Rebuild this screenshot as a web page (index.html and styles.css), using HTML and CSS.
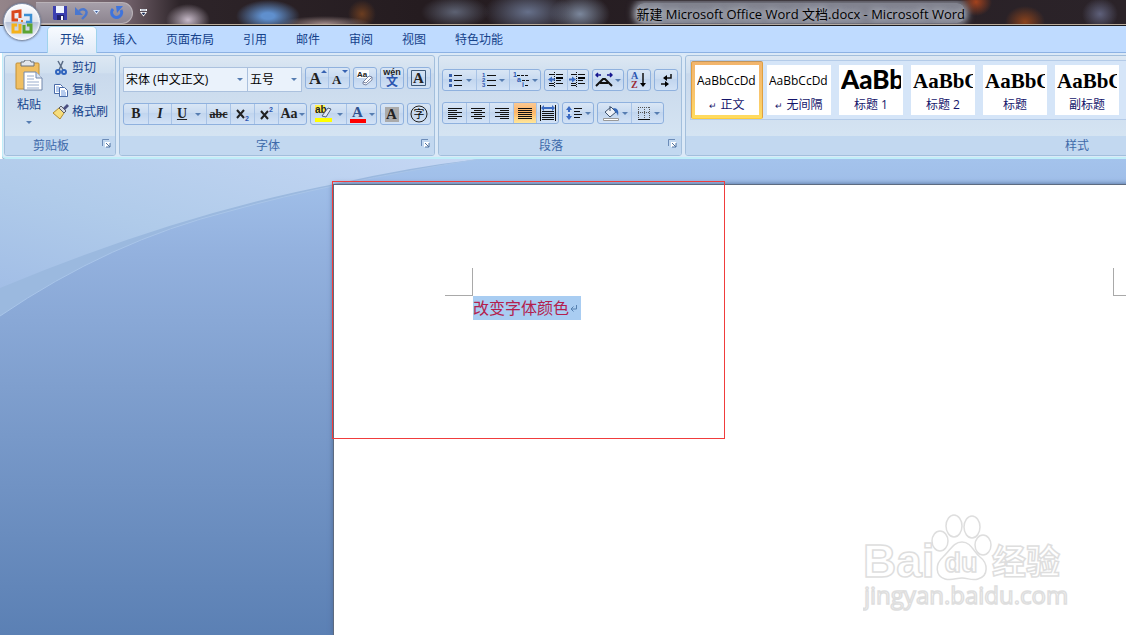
FILE: index.html
```
<!DOCTYPE html>
<html lang="zh-CN">
	<head>
		<meta charset="utf-8" />
		<meta name="viewport" content="width=device-width, initial-scale=1.0" />
		<title>新建 Microsoft Office Word 文档.docx - Microsoft Word</title>
		<link rel="stylesheet" href="styles.css">
	</head>

	<body>
		<header class="titlebar">
			<div class="quick">
				<button class="quick-btn" aria-label="保存">
					<svg width="14" height="14"><path d="M0 0h14v14H1l-1-1z" fill="#3b3fb0"/><path d="M3 0h8v7H3z" fill="#eef3ff"/><path d="M4 9h7v5H4z" fill="#22246e"/><path d="M8 10h2v4H8z" fill="#fff"/></svg>
				</button>
				<button class="quick-btn undo" aria-label="撤消">
					<svg width="14" height="14"><path d="M4 5C9 1 14 5 10 10L7 13" fill="none" stroke="#4a77cf" stroke-width="2.4"/><path d="M0 1v8h8z" fill="#4a77cf"/></svg>
				</button>
				<button class="quick-btn drop" aria-label="撤消列表">
					<svg width="7" height="5"><path d="M0 0h7L3.500 4.500z" fill="#dbe8fb"/><path d="M2 1h3L3.500 3z" fill="#3d5c99"/></svg>
				</button>
				<button class="quick-btn" aria-label="重复">
					<svg width="14" height="14"><path d="M3 3a5 5 0 1 0 8 1" fill="none" stroke="#3f74dc" stroke-width="3"/><path d="M6 0h7L7 7z" fill="#3f74dc"/></svg>
				</button>
			</div>
			<button class="quick-more" aria-label="自定义快速访问工具栏">
				<svg width="7" height="8"><path d="M0 0h7v2H0zM0 3h7L3.500 7.500z" fill="#fff"/><path d="M1 1h5M2 4h3L3.500 6z" stroke="#1b2c55" fill="#1b2c55" stroke-width=".5"/></svg>
			</button>
			<h1 class="title">新建 Microsoft Office Word 文档.docx - Microsoft Word</h1>
			<button class="office" aria-label="Office 按钮">
				<svg width="24" height="26" fill="none" stroke-width="3">
					<path d="M10 9V2L3 3v8h5" stroke="#d9481c"/>
					<path d="M14 6h7v7h-5" stroke="#3c8fd3" stroke-width="2.500"/>
					<path d="M10 15v8H3v-7h4" stroke="#f5b21a"/>
					<path d="M14 16v7h7v-7h-4" stroke="#5ba432"/>
					<path d="M11 11h2v2h-2z" fill="#e2792b"/>
				</svg>
			</button>
		</header>

		<nav class="tabs">
			<button class="tab active">开始</button>
			<button class="tab">插入</button>
			<button class="tab">页面布局</button>
			<button class="tab">引用</button>
			<button class="tab">邮件</button>
			<button class="tab">审阅</button>
			<button class="tab">视图</button>
			<button class="tab">特色功能</button>
		</nav>

		<div class="ribbon">
			<section class="group">
				<div class="tools clipboard">
					<button class="paste">
						<svg width="28" height="32"><rect x="1" y="3" width="23" height="26" rx="1" fill="#f0bf62" stroke="#c28f35"/><path d="M6 2h3l1-2h5l1 2h3v4H6z" fill="#e2e6ec" stroke="#6b7078"/><path d="M9 12h12l6 6v12H9z" fill="#fff" stroke="#7388ac"/><path d="M21 12v6h6" fill="#dbe5f4" stroke="#7388ac"/><path d="M12 16h7M12 19h7M12 22h12M12 25h12M12 28h12" stroke="#9aadcd"/></svg>
						<span>粘贴</span>
						<i class="arrow"></i>
					</button>
					<div class="clip-list">
						<button class="clip-btn">
							<svg width="16" height="16" fill="none"><path d="M5 1l5 9M10 1L6 10" stroke="#5a6b85" stroke-width="1.500"/><circle cx="5" cy="12" r="2" stroke="#2f63bd" stroke-width="2"/><circle cx="11" cy="12" r="2" stroke="#2f63bd" stroke-width="2"/></svg>
							剪切
						</button>
						<button class="clip-btn">
							<svg width="16" height="16" fill="#fff" stroke="#4a6ba8"><path d="M1.500 2.500h6l2 2v7h-8z"/><path d="M6.500 5.500h5l3 3v6h-8z"/><path d="M3 5h3M3 7h3M3 9h3M8 9h4M8 11h5M8 13h5" stroke="#6d97dc"/></svg>
							复制
						</button>
						<button class="clip-btn">
							<svg width="16" height="16"><path d="M0 9l6-5 5 5-4 6z" fill="#f6dd7c" stroke="#b38b2d"/><path d="M6 4l2-2 5 5-2 2z" fill="#d7d9df" stroke="#5a5d66"/><path d="M10 4l4-4 2 2-4 4z" fill="#4a4e80"/></svg>
							格式刷
						</button>
					</div>
				</div>
				<footer class="group-name">剪贴板<button class="launcher" aria-label="剪贴板选项"><svg width="9" height="9"><path d="M.5 7V.5H7" fill="none" stroke="#6c8cb8"/><path d="M3 3h5v5H3z" fill="#fff"/><path d="M4 4l4 4M8 4v4H4" fill="none" stroke="#4d719f"/></svg></button></footer>
			</section>

			<section class="group">
				<div class="tools font-tools">
					<div class="row">
						<div class="combos">
							<select class="combo combo-font" aria-label="字体"><option>宋体 (中文正文)</option></select>
							<select class="combo combo-size" aria-label="字号"><option>五号</option></select>
						</div>
						<div class="set">
							<button class="btn w22" aria-label="增大字体"><svg width="20" height="18"><text x="2" y="15" class="serif" font-size="17">A</text><path d="M14 4h6l-3-3z" fill="#3762b2"/></svg></button>
							<button class="btn w21" aria-label="缩小字体"><svg width="20" height="18"><text x="3" y="15" class="serif" font-size="13">A</text><path d="M13 1h6l-3 3z" fill="#3762b2"/></svg></button>
						</div>
						<div class="set"><button class="btn w22" aria-label="清除格式"><svg width="20" height="18"><path d="M2 1h12v8H2z" fill="#fff"/><text x="2" y="8" class="sans" font-size="8">Aa</text><path d="M8 13l6-6 3 1v3l-6 5-3-1z" fill="#fff" stroke="#7a86a4"/><path d="M8 13l3 1 6-6" fill="none" stroke="#7a86a4"/></svg></button></div>
						<div class="set"><button class="btn w22" aria-label="拼音指南"><svg width="20" height="20"><text x="10" y="7" class="sans" font-size="9" text-anchor="middle">wén</text><text x="10" y="18" class="cjk blue" font-size="12" font-weight="700" text-anchor="middle">文</text></svg></button></div>
						<div class="set"><button class="btn w22" aria-label="字符边框"><svg width="18" height="18"><path d="M1.500 1.500h14v15h-14z" fill="none" stroke="#3d5878"/><text x="3" y="14" class="serif" font-size="15">A</text></svg></button></div>
					</div>
					<div class="row">
						<div class="set">
							<button class="btn w24 serif-b"><b>B</b></button>
							<button class="btn w23 serif-b"><i>I</i></button>
							<button class="btn w35 serif-b"><u>U</u><i class="arrow"></i></button>
							<button class="btn w24 strike">abc</button>
							<button class="btn w24" aria-label="下标"><svg width="18" height="16"><path d="M3 4l7 8M10 4l-7 8" stroke="#222" stroke-width="2"/><text x="11" y="15" class="sans blue" font-size="7">2</text></svg></button>
							<button class="btn w24" aria-label="上标"><svg width="18" height="16"><path d="M3 5l7 8M10 5l-7 8" stroke="#222" stroke-width="2"/><text x="11" y="6" class="sans blue" font-size="7">2</text></svg></button>
							<button class="btn w28 case">Aa<i class="arrow"></i></button>
						</div>
						<div class="set">
							<button class="btn w35" aria-label="突出显示"><svg width="20" height="18"><path d="M0 0h10v8H0z" fill="#fff24a"/><text x="0" y="8" class="sans" font-size="10">ab</text><path d="M7 11l6-8 3 1-5 8z" fill="#e3e9f3" stroke="#51617e"/><path d="M0 13h17v4H0z" fill="#ff0"/></svg><i class="arrow"></i></button>
							<button class="btn w30" aria-label="字体颜色"><svg width="18" height="18"><text x="3" y="12" class="serif navy" font-size="15">A</text><path d="M1 14h16v4H1z" fill="#f00"/></svg><i class="arrow"></i></button>
						</div>
						<div class="set"><button class="btn w22" aria-label="字符底纹"><svg width="18" height="18"><path d="M2 2h14v15H2z" fill="#aaa"/><text x="3" y="14" class="serif" font-size="15">A</text></svg></button></div>
						<div class="set"><button class="btn w22" aria-label="带圈字符"><svg width="18" height="18"><circle cx="9" cy="9" r="8" fill="none" stroke="#222"/><text x="9" y="13" class="cjk" font-size="11" text-anchor="middle">字</text></svg></button></div>
					</div>
				</div>
				<footer class="group-name">字体<button class="launcher" aria-label="字体选项"><svg width="9" height="9"><path d="M.5 7V.5H7" fill="none" stroke="#6c8cb8"/><path d="M3 3h5v5H3z" fill="#fff"/><path d="M4 4l4 4M8 4v4H4" fill="none" stroke="#4d719f"/></svg></button></footer>
			</section>

			<section class="group">
				<div class="tools para-tools">
					<div class="row">
						<div class="set">
							<button class="btn w33" aria-label="项目符号"><svg width="16" height="16"><path d="M1 2h3v3H1zM1 7h3v3H1zM1 12h3v3H1z" fill="#3a62ad"/><path d="M6 3.500h8M6 8.500h8M6 13.500h8" stroke="#111"/></svg><i class="arrow"></i></button>
							<button class="btn w33" aria-label="编号"><svg width="16" height="16"><text class="sans blue" font-size="6"><tspan x="1" y="5">1</tspan><tspan x="1" y="10">2</tspan><tspan x="1" y="15">3</tspan></text><path d="M6 3.500h9M6 8.500h9M6 13.500h9" stroke="#111"/></svg><i class="arrow"></i></button>
							<button class="btn w31" aria-label="多级列表"><svg width="17" height="16"><text class="sans blue" font-size="7"><tspan x="0" y="5">1</tspan><tspan x="4" y="10">a</tspan><tspan x="9" y="15">i</tspan></text><path d="M4 3.500h12M9 8.500h7M12 13.500h4" stroke="#111" stroke-dasharray="3 1"/></svg><i class="arrow"></i></button>
						</div>
						<div class="set">
							<button class="btn w22" aria-label="减少缩进量"><svg width="18" height="16"><path d="M2 2.500h5M9 2.500h7M9 5.500h7M9 8.500h5M2 11.500h5M9 11.500h7M2 13.500h5" stroke="#111"/><path d="M9 5h7v2H9z"/><path d="M7.500 0v16" stroke="#111" stroke-dasharray="1 1"/><path d="M1 7.500l4-3v2h3v2H5v2z" fill="#3a6ac2"/></svg></button>
							<button class="btn w21" aria-label="增加缩进量"><svg width="18" height="16"><path d="M2 2.500h5M9 2.500h7M9 5.500h7M9 8.500h5M2 11.500h5M9 11.500h7M2 13.500h5" stroke="#111"/><path d="M9 5h7v2H9z"/><path d="M7.500 0v16" stroke="#111" stroke-dasharray="1 1"/><path d="M7 7.500l-4-3v2H0v2h3v2z" fill="#3a6ac2"/></svg></button>
						</div>
						<div class="set"><button class="btn w30" aria-label="中文版式"><svg width="18" height="16"><path d="M1 14l7-7h2l7 7M5 11h8" fill="none" stroke="#111" stroke-width="2"/><path d="M1 3h5M12 3h5M3 1L1 3l2 2M15 1l2 2-2 2" fill="none" stroke="#16168f" stroke-width="1.500"/></svg><i class="arrow"></i></button></div>
						<div class="set"><button class="btn w22" aria-label="排序"><svg width="18" height="18"><text x="1" y="8" class="serif blue" font-size="10">A</text><text x="1" y="17" class="serif red" font-size="10">Z</text><path d="M13 2v12" stroke="#111" stroke-width="1.500"/><path d="M10 12h6l-3 4z"/></svg></button></div>
						<div class="set"><button class="btn w22" aria-label="显示编辑标记"><svg width="16" height="16"><path d="M13 2v4H7M3 12h6" fill="none" stroke="#111" stroke-width="1.500"/><path d="M9 3v6L5 6zM7 9v6l4-3z"/></svg></button></div>
					</div>
					<div class="row">
						<div class="set">
							<button class="btn w23" aria-label="左对齐"><svg width="16" height="14"><path d="M1 2.500h14M1 4.500h9M1 6.500h14M1 8.500h9M1 10.500h14M1 12.500h9" stroke="#111"/></svg></button>
							<button class="btn w23" aria-label="居中"><svg width="16" height="14"><path d="M1 2.500h14M4 4.500h8M1 6.500h14M4 8.500h8M1 10.500h14M4 12.500h8" stroke="#111"/></svg></button>
							<button class="btn w24" aria-label="右对齐"><svg width="16" height="14"><path d="M1 2.500h14M6 4.500h9M1 6.500h14M6 8.500h9M1 10.500h14M6 12.500h9" stroke="#111"/></svg></button>
							<button class="btn w23 on" aria-label="两端对齐"><svg width="16" height="14"><path d="M1 2.500h14M1 4.500h14M1 6.500h14M1 8.500h14M1 10.500h14M1 12.500h14" stroke="#111"/></svg></button>
							<button class="btn w22" aria-label="分散对齐"><svg width="18" height="16"><path d="M1.500 0v16M16.500 0v16M3 6.500h12M3 8.500h12M3 10.500h12M3 12.500h12M3 14.500h12" stroke="#111"/><path d="M2 3l3-3v2h8V0l3 3-3 3V4H5v2z" fill="#3a6ac2"/></svg></button>
						</div>
						<div class="set"><button class="btn w30" aria-label="行距"><svg width="18" height="16"><path d="M1 5l3-4 3 4H5v6h2l-3 4-3-4h2V5z" fill="#3a6ac2"/><path d="M1 8h6" stroke="#d1e1f7" stroke-width="2"/><path d="M9 3.500h8M9 6.500h6M9 9.500h8M9 12.500h6" stroke="#111"/></svg><i class="arrow"></i></button></div>
						<div class="set">
							<button class="btn w33" aria-label="底纹"><svg width="18" height="16"><path d="M3 7l6-5 5 5-6 5z" fill="#eef2f8" stroke="#3f536e"/><path d="M8 6V1" stroke="#3f536e"/><path d="M11 3c5 0 6 3 5 8-1-3-2-4-3-4z" fill="#3467b8"/><path d="M1.500 13.500h15v2h-15z" fill="#fff" stroke="#999"/></svg><i class="arrow"></i></button>
							<button class="btn w32" aria-label="边框"><svg width="16" height="16"><path d="M2 2.500h12M2 7.500h12M2.500 2v12M8.500 2v12M13.500 2v12" stroke="#555" stroke-dasharray="1 1"/><path d="M2 14.500h12" stroke="#111"/></svg><i class="arrow"></i></button>
						</div>
					</div>
				</div>
				<footer class="group-name">段落<button class="launcher" aria-label="段落选项"><svg width="9" height="9"><path d="M.5 7V.5H7" fill="none" stroke="#6c8cb8"/><path d="M3 3h5v5H3z" fill="#fff"/><path d="M4 4l4 4M8 4v4H4" fill="none" stroke="#4d719f"/></svg></button></footer>
			</section>

			<section class="group styles-group">
				<div class="tools">
					<div class="gallery">
						<button class="style selected"><span class="card"><span class="sample">AaBbCcDd</span><span class="name"><small>↵</small> 正文</span></span></button>
						<button class="style"><span class="card"><span class="sample">AaBbCcDd</span><span class="name"><small>↵</small> 无间隔</span></span></button>
						<button class="style"><span class="card"><span class="sample big">AaBb</span><span class="name">标题 1</span></span></button>
						<button class="style"><span class="card"><span class="sample heading">AaBbC</span><span class="name">标题 2</span></span></button>
						<button class="style"><span class="card"><span class="sample heading">AaBbC</span><span class="name">标题</span></span></button>
						<button class="style"><span class="card"><span class="sample heading">AaBbC</span><span class="name">副标题</span></span></button>
					</div>
				</div>
				<footer class="group-name">样式</footer>
			</section>
		</div>

		<main class="workspace">
			<svg class="swoosh" width="500" height="160">
				<defs>
					<linearGradient id="sky" x1="0" y1="1" x2="1" y2="0">
						<stop offset="0" stop-color="#a2bee6"/>
						<stop offset=".4" stop-color="#b0cbea"/>
						<stop offset="1" stop-color="#c5d7f4"/>
					</linearGradient>
				</defs>
				<path d="M0 157Q110 82 230 52Q330 24 480 0H0z" fill="#9bb9df"/>
				<path d="M0 129Q180 54 340 24Q410 8 480 0H0z" fill="url(#sky)"/>
				<path d="M0 157Q110 82 230 52Q330 24 480 0" fill="none" stroke="#a9c5e9"/>
			</svg>
			<article class="page">
				<i class="crop crop-left"></i>
				<i class="crop crop-right"></i>
				<p class="line"><span class="selection">改变字体颜色<svg width="12" height="10"><path d="M7.500 2v4H2M4.500 3.500L2 6l2.500 2.500" fill="none" stroke="#5580b0"/></svg></span></p>
			</article>
			<div class="marker"></div>
			<svg class="watermark" width="206" height="100" fill="#fff" stroke="#dedede" stroke-width="1.500">
				<text x="0" y="63" font-size="46" class="mark-logo">Bai</text>
				<ellipse cx="77" cy="27" rx="8" ry="10"/>
				<ellipse cx="91" cy="12" rx="8" ry="11"/>
				<ellipse cx="109" cy="13" rx="8" ry="11"/>
				<ellipse cx="120" cy="31" rx="8" ry="10"/>
				<path d="M99 28c9 0 11 9 18 15 8 6 9 19-2 22-6 2-10-1-16-1s-10 3-17 1c-10-3-10-15-2-22 7-6 10-15 19-15z"/>
				<text x="98" y="58" font-size="27" text-anchor="middle" class="mark-logo">du</text>
				<text x="129" y="60" font-size="34" class="mark-cn">经验</text>
				<text x="1" y="90" font-size="24" class="mark">jingyan.baidu.com</text>
			</svg>
		</main>
	</body>
</html>
```

FILE: styles.css
```
* {
	box-sizing: border-box;
}

body {
	margin: 0;
	height: 100vh;
	display: flex;
	flex-direction: column;
	overflow: hidden;
	font-family: "Open Sans", "Noto Sans CJK SC", sans-serif;
	font-size: 12px;
	line-height: 16px;
	color: #15428b;
}

button {
	margin: 0;
	padding: 0;
	border: 0;
	background: none;
	font: inherit;
	color: inherit;
}

svg {
	display: block;
	flex: none;
}

/* title bar */
.titlebar {
	position: relative;
	z-index: 1;
	flex: none;
	display: flex;
	align-items: center;
	height: 26px;
	padding-left: 36px;
	border-bottom: 1px solid #1b1b1f;
	box-shadow: inset 0 -1px #b9ab9b;
	background:
		radial-gradient(ellipse 22px 16px at 188px 20px, #c7bac9, transparent),
		radial-gradient(ellipse 32px 16px at 268px 16px, #5f8fcd 20%, transparent),
		radial-gradient(ellipse 46px 8px at 325px 24px, #a08a88, transparent),
		radial-gradient(ellipse 14px 14px at 362px 14px, #6b3d20, transparent),
		radial-gradient(ellipse 34px 16px at 455px 12px, #5d6273, transparent),
		radial-gradient(ellipse 44px 22px at 528px 12px, #66708a, transparent),
		radial-gradient(ellipse 30px 20px at 580px 14px, #7b879c, transparent),
		radial-gradient(ellipse 16px 14px at 976px 2px, #a3421d, transparent),
		radial-gradient(ellipse 20px 16px at 1025px 22px, #8c431c, transparent),
		radial-gradient(ellipse 18px 16px at 1100px 14px, #5e607a, transparent),
		linear-gradient(90deg, #94858a, #6d5d66 130px, #2d2429 180px, #251c20 420px, #2b2329);
}

.quick {
	display: flex;
	align-items: center;
	height: 22px;
	width: 97px;
	padding-left: 17px;
	border: 1px solid #b9b2b8;
	border-left: 0;
	border-radius: 0 11px 11px 0;
	background: linear-gradient(#a69fa9, #8d8590);
}

.quick-btn {
	flex: none;
}

.undo {
	margin-left: 8px;
}

.drop {
	margin: 0 10px 0 4px;
}

.quick-more {
	margin-left: 7px;
}

.title {
	margin: 0 161px 0 auto;
	padding-top: 2px;
	font-size: 13px;
	font-weight: 400;
	line-height: 18px;
	white-space: nowrap;
	color: #000;
	background: rgba(165, 172, 187, .7);
	box-shadow: 0 0 7px 3px rgba(165, 172, 187, .7);
	border-radius: 8px;
	clip-path: inset(-2px -12px -2px -12px);
	text-shadow: 0 0 6px #c4c9d4, 0 0 8px #c4c9d4;
}

.office {
	position: absolute;
	left: 3px;
	top: 3px;
	display: flex;
	align-items: center;
	justify-content: center;
	width: 38px;
	height: 38px;
	border: 1px solid #8493ad;
	border-radius: 50%;
	background: linear-gradient(#fdfdfe, #dfe4ee 50%, #b7c3d9 51%, #f2f6fc);
	box-shadow: inset 0 0 2px 1px #fff, 0 0 2px #56637c;
}

/* tabs */
.tabs {
	flex: none;
	display: flex;
	gap: 5px;
	height: 27px;
	padding: 1px 0 0 48px;
	border-bottom: 1px solid #8db2e3;
	background: #bfdbff;
}

.tab {
	padding: 0 12px;
}

.active {
	height: 26px;
	border-radius: 4px 4px 0 0;
	background: linear-gradient(#f8fbff, #e1ebf7);
	box-shadow: 0 0 0 1px #9fd3ec;
	clip-path: inset(-1px -1px 0 -1px);
}

/* ribbon */
.ribbon {
	flex: none;
	display: flex;
	gap: 3px;
	margin-left: 2px;
	padding: 2px 0 1px 1px;
	overflow: hidden;
	background: #dbe9f7;
	border-bottom: 2px solid #c0eef8;
	border-left: 1px solid #c0eef8;
	border-radius: 0 0 0 4px;
	position: relative;
	box-shadow: 0 1px #8fa9c8;
}

.group {
	flex: none;
	display: flex;
	flex-direction: column;
	height: 101px;
	border: 1px solid #a3bfdc;
	border-radius: 3px;
	background: linear-gradient(#dde8f3, #d0dfef 17%, #c9d9ec 18%, #d8e7f4);
	overflow: hidden;
}

.tools {
	flex: 1;
}

.group-name {
	position: relative;
	height: 19px;
	padding-right: 18px;
	text-align: center;
	line-height: 19px;
	color: #3e6aaa;
	background: #c2d8f0;
}

.launcher {
	position: absolute;
	right: 4px;
	top: 3px;
}

.arrow {
	display: block;
	flex: none;
	border: 3px solid transparent;
	border-top-color: #567db1;
	border-bottom: 0;
}

.clipboard {
	display: flex;
	width: 110px;
	padding: 4px 0 0 10px;
}

.paste {
	display: flex;
	flex-direction: column;
	align-items: center;
	width: 28px;
	gap: 5px;
}

.paste .arrow {
	margin-top: 3px;
}

.clip-list {
	display: flex;
	flex-direction: column;
	gap: 6px;
	margin-left: 10px;
}

.clip-btn {
	display: flex;
	align-items: center;
	gap: 3px;
	white-space: nowrap;
}

.font-tools,
.para-tools {
	display: flex;
	flex-direction: column;
	gap: 11px;
	padding: 11px 3px 0;
}

.para-tools {
	padding-top: 13px;
}

.row {
	display: flex;
	align-items: flex-start;
	gap: 3px;
}

.combos {
	display: flex;
}

.combo {
	appearance: none;
	height: 25px;
	padding: 0 2px;
	border: 1px solid #abc1de;
	border-radius: 0;
	font: inherit;
	color: #000;
	background: #eaf2fb url("data:image/svg+xml,%3Csvg xmlns='http://www.w3.org/2000/svg' width='6' height='4'%3E%3Cpath d='M0 0h6L3 3z' fill='%23567db1'/%3E%3C/svg%3E") no-repeat right 4px center;
}

.combo-font {
	width: 125px;
}

.combo-size {
	width: 54px;
	border-left: 0;
}

.set {
	display: flex;
	height: 22px;
	border: 1px solid #8fb1de;
	border-radius: 3px;
	background: linear-gradient(#d9e6f5, #c9dbf1 45%, #c1d5ee 46%, #d2e2f6);
	overflow: hidden;
}

.btn {
	display: flex;
	align-items: center;
	justify-content: center;
	gap: 2px;
	color: #222;
}

.btn + .btn {
	border-left: 1px solid #a8c3e6;
}

.w21 { width: 21px; }
.w22 { width: 22px; }
.w23 { width: 23px; }
.w24 { width: 24px; }
.w28 { width: 28px; }
.w30 { width: 30px; }
.w31 { width: 31px; }
.w32 { width: 32px; }
.w33 { width: 33px; }
.w35 { width: 35px; }

.on {
	background: linear-gradient(#fbc993, #fcb568 45%, #ffe79a);
}

.serif-b,
.case,
.strike {
	font-family: "Liberation Serif", serif;
	font-size: 14px;
	font-weight: 700;
}

.w35.serif-b {
	gap: 8px;
}

.strike {
	font-size: 12px;
	text-decoration: line-through;
}

.case {
	gap: 1px;
}

.serif {
	font-family: "Liberation Serif", serif;
	font-weight: 700;
	fill: #222;
}

.sans {
	font-family: "Liberation Sans", sans-serif;
	font-weight: 700;
	fill: #222;
}

.cjk {
	font-family: "Noto Sans CJK SC", sans-serif;
}

.blue {
	fill: #2b55b0;
}

.navy {
	fill: #2f528f;
}

.red {
	fill: #9c2a36;
}

/* style gallery, runs past the right edge */
.styles-group {
	width: 784px;
}

.styles-group .group-name {
	padding-right: 0;
}

.gallery {
	display: flex;
	margin: 4px 0 0 4px;
	border: 1px solid #b4cbe8;
	background: #d5e5f8;
}

.style {
	width: 72px;
	height: 58px;
	padding: 3px;
	border: 1px solid transparent;
}

.selected {
	border-color: #c3955a #e0a040 #ffce3a;
	border-radius: 2px;
	background: linear-gradient(#f2b46c, #f9c56d 60%, #ffdc5e);
}

.card {
	display: block;
	height: 50px;
	overflow: hidden;
	background: #fff;
}

.sample {
	display: block;
	height: 32px;
	margin: 0 2px;
	line-height: 32px;
	text-align: left;
	color: #000;
	white-space: nowrap;
	overflow: hidden;
}

.big {
	font-family: Lato, sans-serif;
	font-size: 26px;
	font-weight: 900;
	line-height: 28px;
}

.heading {
	font-family: "Liberation Serif", serif;
	font-size: 21px;
	font-weight: 700;
}

.name {
	display: block;
	text-align: center;
	color: #15156b;
}

.name small {
	font-size: 9px;
}

/* document area */
.workspace {
	position: relative;
	flex: 1;
	display: flex;
	padding: 25px 0 0 333px;
	overflow: hidden;
	background: linear-gradient(#a4c3ec, #93b1de 20%, #7f9fce 48%, #5b80b4);
}

.swoosh {
	position: absolute;
	left: 0;
	top: 0;
}

.page {
	position: relative;
	flex: none;
	width: 920px;
	padding: 111px 139px 0;
	border: 1px solid #5d6b80;
	border-bottom: 0;
	background: #fff;
	box-shadow: 0 0 5px #4f6b96;
}

.crop {
	position: absolute;
	top: 83px;
	width: 28px;
	height: 28px;
	border-bottom: 1px solid #a9a9a9;
}

.crop-left {
	left: 111px;
	border-right: 1px solid #a9a9a9;
}

.crop-right {
	right: 111px;
	border-left: 1px solid #a9a9a9;
}

.line {
	margin: 0;
	font-size: 16px;
	font-weight: 400;
	line-height: 24px;
	color: #b3204d;
}

.selection {
	display: inline-flex;
	align-items: center;
	background: #a9cdf2;
}

.marker {
	position: absolute;
	left: 332px;
	top: 22px;
	width: 393px;
	height: 258px;
	border: 1px solid #f03c3c;
}

.watermark {
	position: absolute;
	right: 57px;
	bottom: 21px;
}

.mark {
	font-family: "Open Sans", sans-serif;
}

.mark-logo {
	font-family: "Liberation Sans", sans-serif;
	font-weight: 700;
}

.mark-cn {
	font-family: "Noto Sans CJK SC", sans-serif;
	font-weight: 700;
}
```
